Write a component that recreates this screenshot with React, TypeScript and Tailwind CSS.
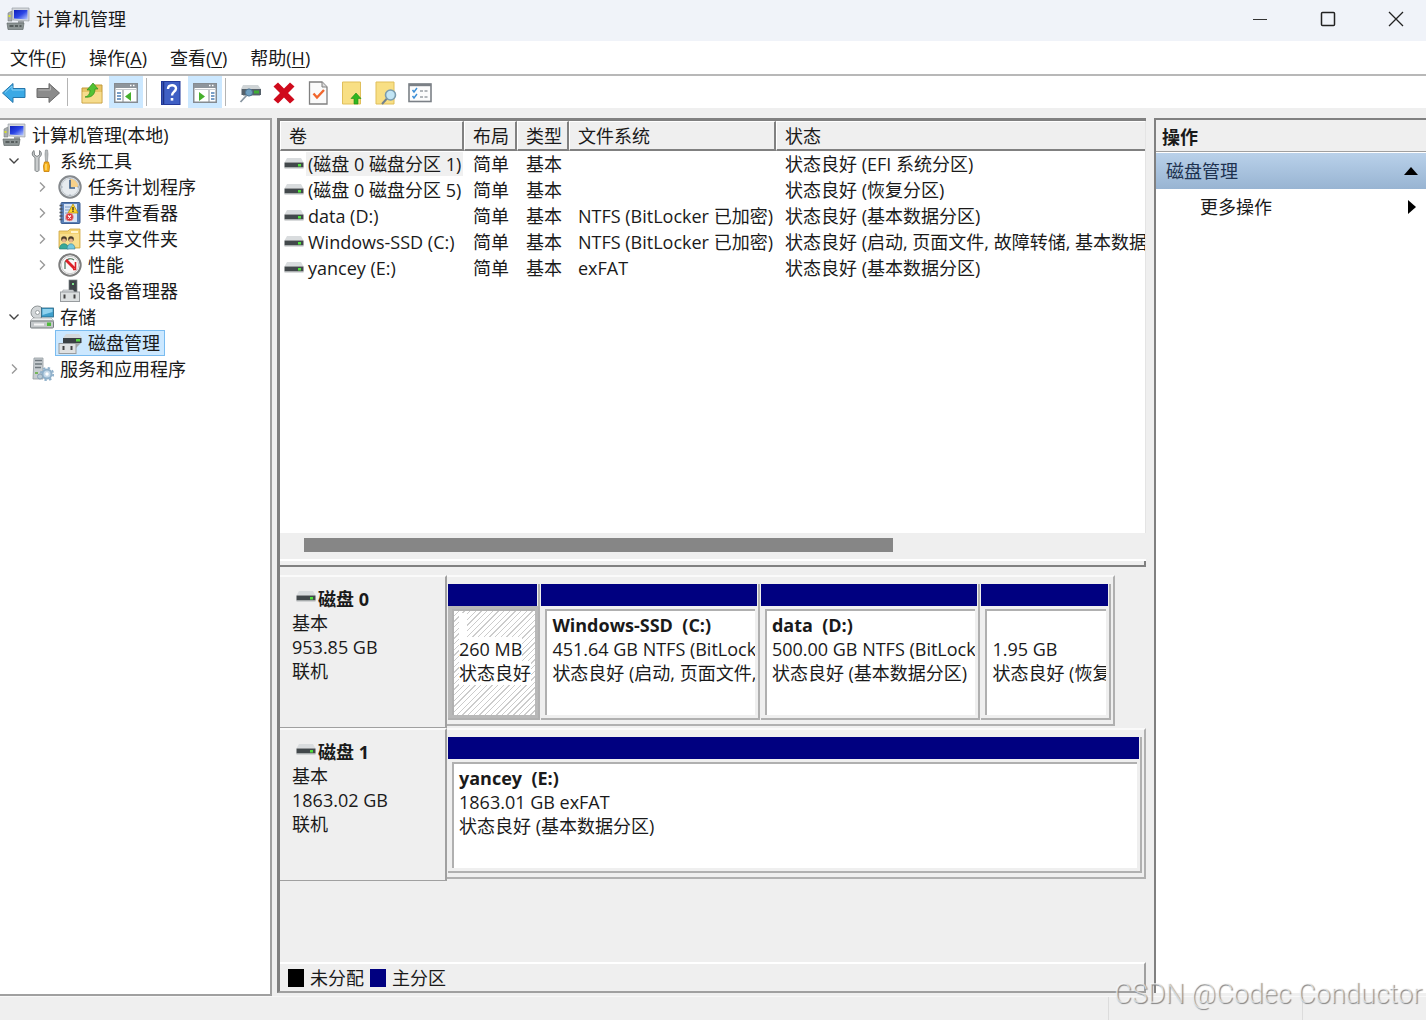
import clsx from "clsx";
import type { ReactNode } from "react";

type IconProps = { className?: string };

const ComputerIcon = ({ className }: IconProps) => (
  <svg viewBox="0 0 24 24" className={className} aria-hidden="true">
    <defs>
      <linearGradient id="screen" x1="0" y1="0" x2="1" y2="1">
        <stop offset="0" stopColor="#1020b8" />
        <stop offset=".5" stopColor="#2b45e6" />
        <stop offset="1" stopColor="#b9cbff" />
      </linearGradient>
    </defs>
    <path d="M2 6l4-2v10H2z" fill="#a9adae" stroke="#7a7f80" strokeWidth=".6" />
    <rect x="2.500" y="8" width="2" height="2" fill="#d6e02c" />
    <path d="M6 1h17v13l-16-1z" fill="#d5d8dc" stroke="#9a9fa5" strokeWidth=".7" />
    <path d="M8 3h13.500v9.500L8 11.500z" fill="url(#screen)" />
    <path d="M12 14h6v3h-6z" fill="#9ea3a6" />
    <path d="M1 16h17l-1 6.500H2z" fill="#8c9494" stroke="#626a6a" strokeWidth=".7" />
    <path d="M3.500 19h4M9 19h3M13.500 19h2" stroke="#444b4b" strokeWidth="1.500" />
  </svg>
);

const ToolsIcon = ({ className }: IconProps) => (
  <svg viewBox="0 0 24 24" className={className} aria-hidden="true">
    <path
      d="M4 1.500C1.500 3 1.500 7 5 8.500V21c0 2 4 2 4 0V8.500c3-1.500 3-5.500 .5-7V6L7 7.500 4.500 6z"
      fill="#c9cccd"
      stroke="#7e8385"
    />
    <path d="M15.500 1h2l.5 4-.6 8h-1.800L15 5z" fill="#b8bcbe" stroke="#85898b" strokeWidth=".6" />
    <path d="M14.500 13h4l1 4-.5 5.500h-5L13.500 17z" fill="#f6b21a" stroke="#c57b05" strokeWidth=".8" />
    <path d="M16 15v6" stroke="#ffe08a" strokeWidth="1.300" />
  </svg>
);

const ClockIcon = ({ className }: IconProps) => (
  <svg viewBox="0 0 24 24" className={className} aria-hidden="true">
    <circle cx="12" cy="12" r="10.700" fill="#e7ebef" stroke="#85898d" strokeWidth="2" />
    <path d="M12 12V3.500A8.500 8.500 0 0 1 20.500 12z" fill="#f7d08a" />
    <circle cx="12" cy="12" r="8.700" fill="none" stroke="#c4cbd1" />
    <path d="M12 5v8h5" fill="none" stroke="#3f5f86" strokeWidth="1.600" />
    <path d="M12 3.500v1M12 19.500v1M3.500 12h1M19.500 12h1" stroke="#6f7f90" />
  </svg>
);

const EventIcon = ({ className }: IconProps) => (
  <svg viewBox="0 0 24 24" className={className} aria-hidden="true">
    <rect x="3" y="1.500" width="19" height="21" rx="1" fill="#5a80b8" stroke="#3e5f93" />
    <rect x="6" y="3" width="13" height="18" fill="#d7e4f5" />
    <path d="M7 6h6M7 9h5M7 12h4M7 18h2" stroke="#7d9cc8" />
    <path d="M1.500 4.500h3M1.500 8h3M1.500 11.500h3M1.500 15h3M1.500 18.500h3" stroke="#4b5560" strokeWidth="1.300" />
    <path d="M15 3l5 9H10z" fill="#ffd42a" stroke="#b18b00" strokeWidth=".7" />
    <path d="M15 6v3.500M15 10v1" stroke="#222" strokeWidth="1.200" />
    <circle cx="11.500" cy="16" r="3.900" fill="#d8353b" stroke="#f0a0a0" strokeWidth=".7" />
    <path d="M10 14.500l3 3M13 14.500l-3 3" stroke="#fff" strokeWidth="1.100" />
  </svg>
);

const SharedFolderIcon = ({ className }: IconProps) => (
  <svg viewBox="0 0 24 24" className={className} aria-hidden="true">
    <path d="M1 4h9l2-2h10v19H1z" fill="#f3d271" stroke="#cda441" strokeWidth=".8" />
    <path d="M13 4h7v2h-7z" fill="#fff5cc" />
    <path d="M2 7h19v13H2z" fill="#f8df8e" />
    <circle cx="6" cy="12" r="2.800" fill="#4a3b2a" />
    <circle cx="6" cy="13.500" r="2" fill="#e4b48b" />
    <path d="M1.500 22c0-7 9-7 9 0z" fill="#39a99a" stroke="#207a70" strokeWidth=".6" />
    <circle cx="13" cy="12" r="2.800" fill="#4a3b2a" />
    <circle cx="13" cy="13.500" r="2" fill="#e4b48b" />
    <path d="M9 22c0-7 8-7 8 0z" fill="#74c8de" stroke="#347e96" strokeWidth=".6" />
  </svg>
);

const PerformanceIcon = ({ className }: IconProps) => (
  <svg viewBox="0 0 24 24" className={className} aria-hidden="true">
    <circle cx="12" cy="12" r="10.700" fill="#fff" stroke="#7d7d7d" strokeWidth="2" />
    <circle cx="12" cy="12" r="8.700" fill="#f8f8f8" stroke="#c8c8c8" />
    <path d="M7 16V9a6 6 0 0 1 9-2" fill="none" stroke="#4a6e58" strokeWidth="1.200" />
    <path d="M8 7l8.500 8.500" fill="none" stroke="#dc1f26" strokeWidth="2.800" />
    <path d="M17.500 9v7.500H15" fill="none" stroke="#dc1f26" strokeWidth="1.600" />
  </svg>
);

const DeviceIcon = ({ className }: IconProps) => (
  <svg viewBox="0 0 24 24" className={className} aria-hidden="true">
    <rect x="11" y="1" width="8" height="13" fill="#3e4448" stroke="#7b8286" strokeWidth=".7" />
    <rect x="14" y="4" width="2" height="2" fill="#7fe08b" />
    <path d="M5 11h10l2 3H4z" fill="#d9dcde" stroke="#9a9fa2" strokeWidth=".6" />
    <rect x="2.500" y="13" width="19" height="9.500" fill="#dcdfe0" stroke="#989c9f" />
    <path d="M6.500 15.500v4M16.500 15.500v4" stroke="#444" strokeWidth="2" />
  </svg>
);

const StorageIcon = ({ className }: IconProps) => (
  <svg viewBox="0 0 24 24" className={className} aria-hidden="true">
    <circle cx="7.500" cy="7.500" r="6.500" fill="#d2d6d8" stroke="#8f9597" />
    <circle cx="7.500" cy="7.500" r="2" fill="#fff" stroke="#9aa0a2" />
    <rect x="11.500" y="3" width="12" height="9" fill="#3f9fcb" stroke="#27617f" strokeWidth=".8" />
    <path d="M12.500 4h10v3l-10 3z" fill="#8fd2ee" />
    <path d="M3 13h18l3 3H0z" fill="#eceeef" stroke="#9da1a3" strokeWidth=".6" />
    <rect x=".5" y="16" width="23" height="7" rx="1" fill="#c4c8ca" stroke="#777c7f" />
    <path d="M4 19.500h10" stroke="#f5f5f5" strokeWidth="2" />
    <rect x="17" y="17.500" width="4" height="3.500" fill="#4fba3a" />
  </svg>
);

const DiskMgmtIcon = ({ className }: IconProps) => (
  <svg viewBox="0 0 24 24" className={className} aria-hidden="true">
    <path d="M8 3h13l3 4H5z" fill="#d4d8da" />
    <rect x="5" y="7" width="18.500" height="5" fill="#3a4043" />
    <rect x="18" y="8" width="4" height="2.500" fill="#56d43f" />
    <path d="M12 12h11l-5 5z" fill="#a4a9ab" />
    <rect x="1" y="12.500" width="17" height="10" fill="#dfe1e2" stroke="#999da0" />
    <path d="M5.500 15v4M13.500 15v4" stroke="#444" strokeWidth="2" />
  </svg>
);

const ServicesIcon = ({ className }: IconProps) => (
  <svg viewBox="0 0 24 24" className={className} aria-hidden="true">
    <path d="M4 1h9v21H3z" fill="#c7cdd1" stroke="#939b9f" strokeWidth=".8" />
    <path d="M5 3.500h7M5 7h7M5 10.500h6" stroke="#6f797f" strokeWidth="1.400" />
    <rect x="5" y="15" width="3" height="2" fill="#77b65c" />
    <circle cx="17" cy="17" r="4.500" fill="#c4d8e8" stroke="#8fb0ca" strokeWidth="2" />
    <circle cx="17" cy="17" r="6.200" fill="none" stroke="#8fb0ca" strokeWidth="1.800" strokeDasharray="2.400 2.470" />
    <circle cx="17" cy="17" r="1.700" fill="#fff" />
    <circle cx="10" cy="19.500" r="2.500" fill="#b9c9d5" stroke="#8ba3b6" />
  </svg>
);

const DriveIcon = ({ className }: IconProps) => (
  <svg viewBox="0 0 20 12" className={className} aria-hidden="true">
    <path d="M3 0h14l2.500 4.500H.5z" fill="#d9dcde" />
    <rect x=".5" y="4.500" width="19" height="5" fill="#42484b" />
    <path d="M.5 10h19" stroke="#b4b8ba" />
    <rect x="14" y="6" width="3" height="2.500" fill="#4fe23c" />
  </svg>
);

const ArrowIcon = ({ className, forward }: IconProps & { forward?: boolean }) => (
  <svg viewBox="0 0 24 24" className={className} aria-hidden="true">
    <path
      d={forward ? "M23.500 12L13 2.500v5H1v9h12v5z" : "M.5 12L11 2.500v5h12v9H11v5z"}
      fill={forward ? "#8b8b8b" : "#3ba9e5"}
      stroke={forward ? "#6a6a6a" : "#2576ab"}
    />
    <path
      d={forward ? "M2.500 9h12V5.500" : "M3 11.500l7-6.500v4h12"}
      fill="none"
      stroke={forward ? "#b5b5b5" : "#86d0f5"}
    />
  </svg>
);

const FolderUpIcon = ({ className }: IconProps) => (
  <svg viewBox="0 0 24 24" className={className} aria-hidden="true">
    <path d="M2 7h8l2-3h10v18H2z" fill="#e8c566" stroke="#c39a3b" />
    <path d="M2.500 11h19v10.500h-19z" fill="#f6dc8d" />
    <path d="M5 16c4-1 5-4 5-7H7l6-7 5 6h-3c0 6-4 9-10 8z" fill="#52c234" stroke="#2f8d1b" strokeWidth=".7" />
  </svg>
);

const PaneIcon = ({ className, right }: IconProps & { right?: boolean }) => (
  <svg viewBox="0 0 24 20" className={className} aria-hidden="true">
    <rect x=".75" y=".75" width="22.500" height="18.500" fill="#fff" stroke="#858b91" strokeWidth="1.500" />
    <path d="M1 3h22" stroke="#8e959c" strokeWidth="4" />
    <path d="M16 2.500h1.500M19 2.500h1.500" stroke="#fff" strokeWidth="1.500" />
    <path d="M1 6.500h22" stroke="#c8ccd0" />
    {right ? (
      <>
        <path d="M16 7v12" stroke="#858b91" />
        <path d="M18 10h3.500M18 13h3.500M18 16h3.500" stroke="#4c7fb5" strokeWidth="1.500" />
        <path d="M6 9l6 4.500L6 18z" fill="#46b02c" />
      </>
    ) : (
      <>
        <path d="M9 7v12" stroke="#858b91" />
        <path d="M3 10h4M3 13h4M3 16h4" stroke="#4c7fb5" strokeWidth="1.500" />
        <path d="M17 9l-6 4.500 6 4.500z" fill="#46b02c" />
      </>
    )}
  </svg>
);

const HelpIcon = ({ className }: IconProps) => (
  <svg viewBox="0 0 24 24" className={className} aria-hidden="true">
    <rect x="2.500" y=".5" width="18.500" height="23" fill="#3f5fc4" stroke="#23399a" />
    <path d="M4.500 1v22" stroke="#1e3086" strokeWidth="1.500" />
    <path d="M9 8c0-5 8-5 8-.5 0 3-4 3.500-4 7" fill="none" stroke="#fff" strokeWidth="2.400" />
    <rect x="11.700" y="17" width="2.600" height="2.600" fill="#fff" />
  </svg>
);

const DiskSearchIcon = ({ className }: IconProps) => (
  <svg viewBox="0 0 24 24" className={className} aria-hidden="true">
    <path d="M5 4h15l3 4H3z" fill="#cfd4d6" />
    <rect x="3.500" y="8" width="19.500" height="6" fill="#56616a" />
    <rect x="16" y="9.500" width="5" height="3" fill="#3fae36" />
    <path d="M5 14.500h17" stroke="#b6bbbe" />
    <circle cx="11" cy="11.500" r="3.600" fill="#6f9fc0" stroke="#4e7390" />
    <path d="M8.500 14.500L2.500 21" stroke="#8895a0" strokeWidth="1.800" />
  </svg>
);

const DeleteIcon = ({ className }: IconProps) => (
  <svg viewBox="0 0 24 24" className={className} aria-hidden="true">
    <path
      d="M6 1.500l6 6 6-6L22.500 5.500 16 12l6.500 6.500L18 22.500l-6-6-6 6L1.500 18.500 8 12 1.500 5.500z"
      fill="#cf0a1c"
    />
  </svg>
);

const CheckDocIcon = ({ className }: IconProps) => (
  <svg viewBox="0 0 24 24" className={className} aria-hidden="true">
    <path d="M3.500 1H16l5 5v17H3.500z" fill="#fafafa" stroke="#808080" strokeWidth="1.300" />
    <path d="M16 1v5h5" fill="#ddd" stroke="#808080" />
    <path d="M7.500 12.500l3.500 4L18 9" fill="none" stroke="#f1662d" strokeWidth="2.400" />
  </svg>
);

const DocUpIcon = ({ className }: IconProps) => (
  <svg viewBox="0 0 24 24" className={className} aria-hidden="true">
    <path d="M2.500 1h18v22h-18z" fill="#f8df84" stroke="#e0bf5b" />
    <path d="M16 12l5 5.500h-3V23h-4v-5.500h-3z" fill="#31b51f" stroke="#1f8e14" strokeWidth=".6" />
  </svg>
);

const DocSearchIcon = ({ className }: IconProps) => (
  <svg viewBox="0 0 24 24" className={className} aria-hidden="true">
    <path d="M2 1h18v22H2z" fill="#f8df84" stroke="#e0bf5b" />
    <path d="M13 17.500L8 23" stroke="#71818e" strokeWidth="2" />
    <circle cx="16.500" cy="14" r="5" fill="#c2e5f4" stroke="#7b9cae" strokeWidth="1.600" />
  </svg>
);

const ListIcon = ({ className }: IconProps) => (
  <svg viewBox="0 0 24 20" className={className} aria-hidden="true">
    <rect x="1" y="1" width="22" height="17.500" fill="#fcfcfc" stroke="#7b8086" strokeWidth="1.600" />
    <path d="M1 2h22" stroke="#7b8086" strokeWidth="2.400" />
    <path d="M4.500 7l1.500 2 3-4M4.500 13l1.500 2 3-4" fill="none" stroke="#3b8ed6" strokeWidth="1.400" />
    <path d="M12 8h3M16.500 8h3M12 14h3M16.500 14h3" stroke="#9ba0a5" strokeWidth="1.500" />
  </svg>
);

const Chevron = ({ open }: { open?: boolean }) => (
  <svg viewBox="0 0 12 12" className="h-3 w-3" aria-hidden="true">
    <path
      d={open ? "M1.500 3.500L6 8l4.500-4.500" : "M4 1.500L8.500 6 4 10.500"}
      fill="none"
      stroke={open ? "#444" : "#999"}
      strokeWidth="1.400"
    />
  </svg>
);

const menus = [
  { label: "文件", key: "F" },
  { label: "操作", key: "A" },
  { label: "查看", key: "V" },
  { label: "帮助", key: "H" },
];

type TreeNode = {
  label: string;
  Icon: (props: IconProps) => ReactNode;
  depth: 0 | 1 | 2;
  state?: "open" | "closed";
  selected?: boolean;
};

const tree: TreeNode[] = [
  { label: "计算机管理(本地)", Icon: ComputerIcon, depth: 0 },
  { label: "系统工具", Icon: ToolsIcon, depth: 1, state: "open" },
  { label: "任务计划程序", Icon: ClockIcon, depth: 2, state: "closed" },
  { label: "事件查看器", Icon: EventIcon, depth: 2, state: "closed" },
  { label: "共享文件夹", Icon: SharedFolderIcon, depth: 2, state: "closed" },
  { label: "性能", Icon: PerformanceIcon, depth: 2, state: "closed" },
  { label: "设备管理器", Icon: DeviceIcon, depth: 2 },
  { label: "存储", Icon: StorageIcon, depth: 1, state: "open" },
  { label: "磁盘管理", Icon: DiskMgmtIcon, depth: 2, selected: true },
  { label: "服务和应用程序", Icon: ServicesIcon, depth: 1, state: "closed" },
];

const columns = ["卷", "布局", "类型", "文件系统", "状态"];

const volumes = [
  { name: "(磁盘 0 磁盘分区 1)", fs: "", status: "状态良好 (EFI 系统分区)" },
  { name: "(磁盘 0 磁盘分区 5)", fs: "", status: "状态良好 (恢复分区)" },
  { name: "data (D:)", fs: "NTFS (BitLocker 已加密)", status: "状态良好 (基本数据分区)" },
  {
    name: "Windows-SSD (C:)",
    fs: "NTFS (BitLocker 已加密)",
    status: "状态良好 (启动, 页面文件, 故障转储, 基本数据分",
  },
  { name: "yancey (E:)", fs: "exFAT", status: "状态良好 (基本数据分区)" },
];

type Partition = {
  title: string;
  size: string;
  status: string;
  share: number;
  selected?: boolean;
};

const disks: { name: string; size: string; full?: boolean; partitions: Partition[] }[] = [
  {
    name: "磁盘 0",
    size: "953.85 GB",
    partitions: [
      { title: "", size: "260 MB", status: "状态良好", share: 91, selected: true },
      {
        title: "Windows-SSD  (C:)",
        size: "451.64 GB NTFS (BitLock",
        status: "状态良好 (启动, 页面文件,",
        share: 218,
      },
      {
        title: "data  (D:)",
        size: "500.00 GB NTFS (BitLock",
        status: "状态良好 (基本数据分区)",
        share: 219,
      },
      { title: "", size: "1.95 GB", status: "状态良好 (恢复", share: 128 },
    ],
  },
  {
    name: "磁盘 1",
    size: "1863.02 GB",
    full: true,
    partitions: [
      { title: "yancey  (E:)", size: "1863.01 GB exFAT", status: "状态良好 (基本数据分区)", share: 1 },
    ],
  },
];

const ToolButton = ({
  label,
  active,
  children,
}: {
  label: string;
  active?: boolean;
  children: ReactNode;
}) => (
  <button
    type="button"
    aria-label={label}
    className={clsx("flex h-8 w-[34px] items-center justify-center pt-0.5", active && "bg-[#cce8ff]")}
  >
    {children}
  </button>
);

const Separator = () => <div className="mr-[7px] ml-[3px] h-7 w-px bg-[#b4b4b4]" />;

const TitleBar = () => (
  <header className="flex h-[41px] items-center gap-2 bg-[#f0f3f9] pb-1 pl-1.5">
    <div className="flex flex-1 items-center gap-1.5">
      <ComputerIcon className="h-6 w-6" />
      <h1>计算机管理</h1>
    </div>
    <button type="button" aria-label="最小化" className="flex w-[60px] items-center justify-center">
      <svg viewBox="0 0 16 16" className="h-4 w-4">
        <path d="M1 8.500h14" stroke="#333" />
      </svg>
    </button>
    <button type="button" aria-label="最大化" className="flex w-[60px] items-center justify-center">
      <svg viewBox="0 0 16 16" className="h-4 w-4">
        <rect x="1.500" y="1.500" width="13" height="13" rx="1" fill="none" stroke="#222" strokeWidth="1.500" />
      </svg>
    </button>
    <button type="button" aria-label="关闭" className="flex w-[60px] items-center justify-center">
      <svg viewBox="0 0 16 16" className="h-4 w-4">
        <path d="M1 1l14 14M15 1L1 15" stroke="#222" strokeWidth="1.300" />
      </svg>
    </button>
  </header>
);

const Toolbar = () => (
  <div className="flex h-8 items-center bg-white">
    <div className="flex gap-1.5 pt-0.5 pr-0.5">
      <button type="button" aria-label="后退" className="flex w-7 justify-center">
        <ArrowIcon className="h-6 w-6" />
      </button>
      <button type="button" aria-label="前进" className="flex w-7 justify-center">
        <ArrowIcon forward className="h-6 w-6" />
      </button>
    </div>
    <Separator />
    <ToolButton label="向上一级">
      <FolderUpIcon className="h-6 w-6" />
    </ToolButton>
    <ToolButton label="显示/隐藏控制台树" active>
      <PaneIcon className="h-5 w-6" />
    </ToolButton>
    <Separator />
    <ToolButton label="帮助">
      <HelpIcon className="h-6 w-6" />
    </ToolButton>
    <ToolButton label="显示/隐藏操作窗格" active>
      <PaneIcon right className="h-5 w-6" />
    </ToolButton>
    <Separator />
    <ToolButton label="重新扫描磁盘">
      <DiskSearchIcon className="h-6 w-6" />
    </ToolButton>
    <ToolButton label="删除">
      <DeleteIcon className="h-6 w-6" />
    </ToolButton>
    <ToolButton label="属性">
      <CheckDocIcon className="h-6 w-6" />
    </ToolButton>
    <ToolButton label="打开">
      <DocUpIcon className="h-6 w-6" />
    </ToolButton>
    <ToolButton label="浏览">
      <DocSearchIcon className="h-6 w-6" />
    </ToolButton>
    <ToolButton label="设置">
      <ListIcon className="h-5 w-6" />
    </ToolButton>
  </div>
);

const TreePane = () => (
  <nav className="w-[272px] shrink-0 border-t-2 border-r-2 border-b-2 border-[#a0a0a0] bg-white pt-0.5">
    <ul>
      {tree.map(({ label, Icon, depth, state, selected }) => (
        <li
          key={label}
          className={clsx("flex h-[26px] items-center", depth === 1 && "pl-2", depth === 2 && "pl-9")}
        >
          {depth > 0 && (
            <span className="flex w-[19px] shrink-0">{state && <Chevron open={state === "open"} />}</span>
          )}
          <button
            type="button"
            className={clsx(
              "flex h-full items-center gap-1.5 border pr-1",
              depth === 0 ? "pl-px" : "pl-0.5",
              selected ? "border-[#7abcf0] bg-[#cce8ff]" : "border-transparent",
            )}
          >
            <Icon className="h-6 w-6" />
            <span>{label}</span>
          </button>
        </li>
      ))}
    </ul>
  </nav>
);

const VolumeList = () => (
  <section className="flex min-h-0 flex-1 flex-col border-b-2 border-[#808080]">
    <div className="min-h-0 flex-1 overflow-hidden border-r border-[#e4e4e4] bg-white">
      <table className="w-full table-fixed border-separate border-spacing-0 text-left whitespace-nowrap">
        <colgroup>
          <col className="w-[184px]" />
          <col className="w-[53px]" />
          <col className="w-[52px]" />
          <col className="w-[207px]" />
          <col />
        </colgroup>
        <thead>
          <tr>
            {columns.map((c) => (
              <th
                key={c}
                className="h-[30px] border-t border-r-2 border-b-2 border-l border-t-white border-r-[#808080] border-b-[#808080] border-l-white bg-[#efefef] p-0 pl-2 font-normal last:border-r-0"
              >
                {c}
              </th>
            ))}
          </tr>
        </thead>
        <tbody>
          {volumes.map((v, i) => (
            <tr key={v.name}>
              <td className="h-[26px] p-0 pl-1">
                <div className="flex items-center">
                  <DriveIcon className="h-3 w-5 shrink-0" />
                  <span className={clsx("ml-0.5 px-0.5", i === 0 && "bg-[#f0f0f0]")}>{v.name}</span>
                </div>
              </td>
              <td className="p-0 pl-[9px]">简单</td>
              <td className="p-0 pl-[9px]">基本</td>
              <td className="p-0 pl-[9px]">{v.fs}</td>
              <td className="overflow-hidden p-0 pl-[9px]">{v.status}</td>
            </tr>
          ))}
        </tbody>
      </table>
    </div>
    <div className="h-7 border-b-2 border-white bg-[#efefef] pt-[5px] pl-6">
      <div className="h-3.5 w-[70%] bg-[#868686]" />
    </div>
    <div className="h-1 border-r-2 border-[#808080] bg-[#efefef]" />
  </section>
);

const PartitionBox = ({ partition }: { partition: Partition }) => {
  const { title, size, status, share, selected } = partition;
  return (
    <div
      className="flex min-w-0 basis-0 flex-col border-r-2 border-b-2 border-[#b0b0b0]"
      style={{ flexGrow: share }}
    >
      <div className="h-[22px] border-r border-[#efefef] bg-[#000080]" />
      <div
        className={clsx(
          "flex min-h-0 flex-1 border-t-[3px] border-r-[3px] border-b-[3px] border-l-4",
          selected ? "border-[#b8b8b8]" : "border-[#efefef]",
        )}
      >
        <div
          className={clsx(
            "min-w-0 flex-1 overflow-hidden border-t-2 border-l-2 border-[#b0b0b0] pt-0.5 pl-[5px] leading-6 whitespace-pre",
            selected
              ? "bg-white bg-[repeating-linear-gradient(135deg,#ffffff_0px,#ffffff_3px,#cccccc_3px,#cccccc_4px)]"
              : "bg-white",
          )}
        >
          <div className="h-6 font-bold">{title || <span className="inline-block h-6 w-2 bg-white" />}</div>
          <div className="h-6">
            <span className="bg-white">{size}</span>
          </div>
          <div className="h-6">
            <span className="bg-white">{status}</span>
          </div>
        </div>
      </div>
    </div>
  );
};

const DiskPane = () => (
  <section className="shrink-0 bg-[#efefef] pt-2">
    {disks.map((disk) => (
      <div key={disk.name} className="flex h-[153px]">
        <div className="w-[167px] shrink-0 border-t-2 border-r-2 border-b border-t-[#fafafa] border-r-[#a0a0a0] border-b-[#a0a0a0] pt-2.5 pl-3 leading-6">
          <div className="flex gap-0.5 pl-1 font-bold">
            <DriveIcon className="mt-1 h-3 w-5" />
            <h2>{disk.name}</h2>
          </div>
          <p>基本</p>
          <p>{disk.size}</p>
          <p>联机</p>
        </div>
        <div className="min-w-0 flex-1">
          <div
            className={clsx(
              "flex h-[151px] gap-px border-t-2 border-r-2 border-b-2 border-t-[#fafafa] border-r-[#b0b0b0] border-b-[#b0b0b0] pt-[7px] pr-0.5 pb-1 pl-px",
              disk.full ? "w-full border-r-0" : "w-[95.5%]",
            )}
          >
            {disk.partitions.map((p, i) => (
              <PartitionBox key={i} partition={p} />
            ))}
          </div>
        </div>
      </div>
    ))}
    <div className="mt-[81px] flex h-[29px] items-center border-t-2 border-r-2 border-t-white border-r-[#a0a0a0] pl-2">
      <span className="h-[18px] w-4 bg-black" />
      <span className="ml-1.5">未分配</span>
      <span className="ml-1.5 h-[18px] w-4 bg-[#000080]" />
      <span className="ml-1.5">主分区</span>
    </div>
  </section>
);

const ActionsPane = () => (
  <aside className="w-[272px] shrink-0 border-t-2 border-l-2 border-[#808080] bg-white">
    <h2 className="flex h-8 items-center border-b border-[#a0a0a0] bg-[#efefef] pt-0.5 pl-1.5 font-bold">操作</h2>
    <button
      type="button"
      className="mt-px flex h-9 w-full items-center justify-between bg-linear-to-b from-[#b9d1ea] to-[#98b4d2] pr-2 pl-2.5 text-[#1e3250]"
    >
      磁盘管理
      <svg viewBox="0 0 14 8" className="h-2 w-3.5">
        <path d="M7 0l7 8H0z" fill="#000" />
      </svg>
    </button>
    <button type="button" className="flex h-9 w-full items-center justify-between pr-2.5 pl-11">
      更多操作
      <svg viewBox="0 0 8 14" className="h-3.5 w-2">
        <path d="M0 0l8 7-8 7z" fill="#000" />
      </svg>
    </button>
  </aside>
);

export default function App() {
  return (
    <div className="relative flex min-h-screen flex-col overflow-hidden bg-[#efefef] font-['Open_Sans','Noto_Sans_CJK_SC',sans-serif] text-[18px] leading-6 text-[#1a1a1a]">
      <TitleBar />
      <div className="flex h-[35px] items-center gap-[23px] border-b-2 border-[#b8b8b8] bg-white pl-2.5">
        {menus.map((m) => (
          <button key={m.key} type="button">
            {m.label}(<span className="underline underline-offset-2">{m.key}</span>)
          </button>
        ))}
      </div>
      <Toolbar />
      <main className="flex flex-1 gap-[5px] pt-2.5">
        <TreePane />
        <div className="mb-[3px] flex min-w-0 flex-1 flex-col border-t-[3px] border-b-2 border-l-[3px] border-t-[#808080] border-b-[#a0a0a0] border-l-[#808080]">
          <VolumeList />
          <DiskPane />
        </div>
        <div className="mb-[3px] ml-[3px] flex">
          <ActionsPane />
        </div>
      </main>
      <footer className="flex h-6 justify-end border-t border-[#f8f8f8]">
        <div className="w-[194px] border-l border-[#dcdcdc]" />
        <div className="w-[124px] border-l border-[#dcdcdc]" />
      </footer>
      <p className="absolute right-1 bottom-2 font-[Roboto,sans-serif] text-[27px] leading-9 font-light text-white/60 [text-shadow:1px_1px_1px_#808080]">
        CSDN @Codec Conductor
      </p>
    </div>
  );
}
